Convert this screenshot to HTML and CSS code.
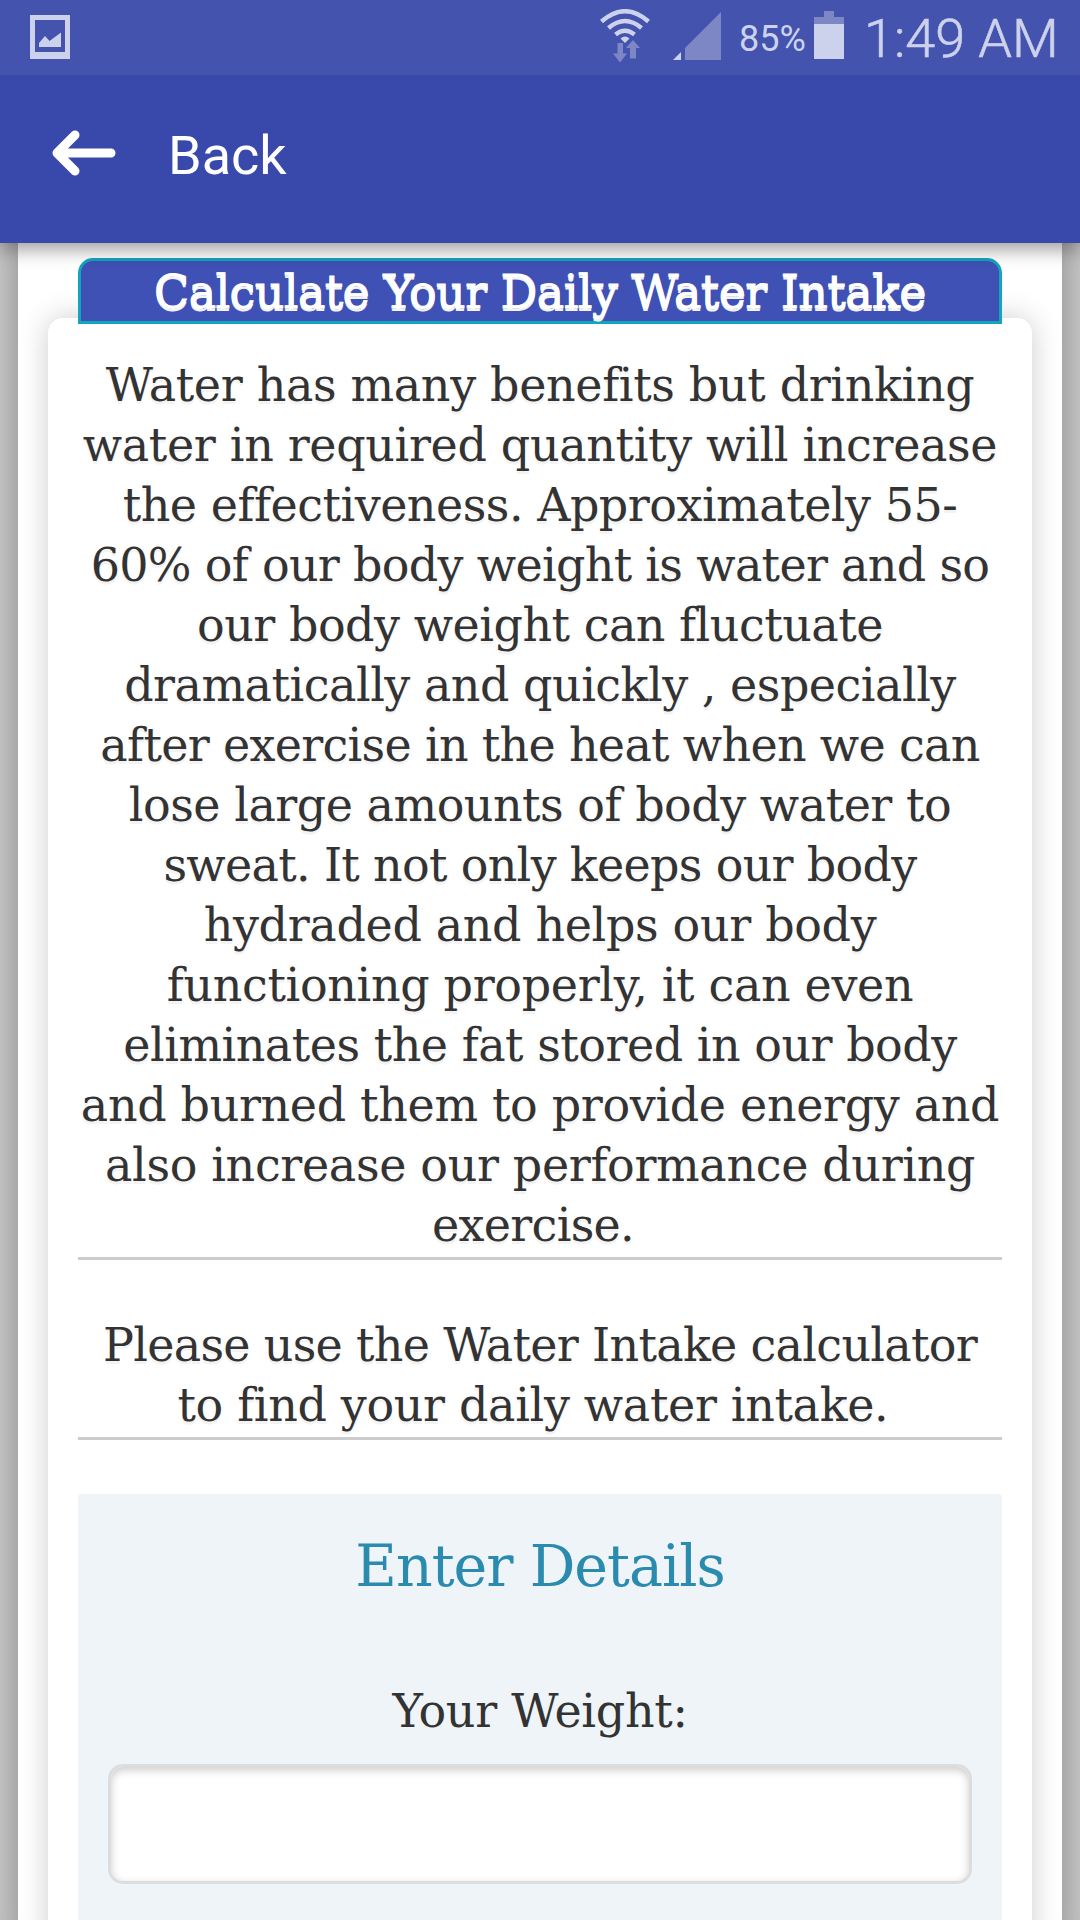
FILE: index.html
```html
<!DOCTYPE html>
<html lang="en">
<head>
<meta charset="UTF-8">
<title>Water Intake Calculator</title>
<link rel="stylesheet" href="styles.css">
</head>
<body>

<div class="status-bar">
    <svg class="picture-icon" width="40" height="44" viewBox="0 0 40 44">
        <path fill-rule="evenodd" d="M0 0H40V44H0ZM5 5V37H35V5Z"/>
        <path d="M9 32V28L15 21L19.500 26L31 17.500V32Z"/>
    </svg>
    <svg class="wifi-icon" width="50" height="54" viewBox="0 0 50 54">
        <g fill="none" stroke="#cdd2ec" stroke-width="4.500">
            <path d="M1.500 12.500Q25 -8 48.500 12.500"/>
            <path d="M8.500 19Q25 5 41.500 19"/>
            <path d="M15.500 25.500Q25 18 34.500 25.500"/>
        </g>
        <path d="M20.500 29.500Q25 25.500 29.500 29.500L25 34Z"/>
        <path class="faint" d="M17.500 34H23V44.500H27L20 53.500L13 44.500H17.500ZM30 49.500V39H26L33 31L40 39H36V49.500Z"/>
    </svg>
    <svg class="signal-icon" width="48" height="48" viewBox="0 0 48 48">
        <path d="M0 48L8 40V48Z"/>
        <path class="faint" d="M12 48V36L48 0V48Z"/>
    </svg>
    <span class="battery-text">85%</span>
    <svg class="battery-icon" width="30" height="48" viewBox="0 0 30 48">
        <path class="faint" d="M10 0H20V6H30V13H0V6H10Z"/>
        <path d="M0 13H30V48H0Z"/>
    </svg>
    <span class="time">1:49 AM</span>
</div>

<div class="header">
    <svg class="back-arrow" width="64" height="46" viewBox="0 0 64 46">
        <path d="M23 5L5 23L23 41M6 23H59"/>
    </svg>
    <span class="back-text">Back</span>
</div>

<div class="page">
    <h1 class="title">Calculate Your Daily Water Intake</h1>
    <div class="card">
        <p class="intro">
            <span class="loose">Water has many benefits but drinking</span><br>
            <span class="loose">water in required quantity will increase</span><br>
            the effectiveness. Approximately 55-<br>
            <span class="tight">60% of our body weight is water and so</span><br>
            our body weight can fluctuate<br>
            dramatically and quickly , especially<br>
            <span class="tight">after exercise in the heat when we can</span><br>
            lose large amounts of body water to<br>
            <span class="tight">sweat. It not only keeps our body</span><br>
            <span class="loose">hydraded and helps our body</span><br>
            <span class="loose">functioning properly, it can even</span><br>
            eliminates the fat stored in our body<br>
            <span class="loose">and burned them to provide energy and</span><br>
            <span class="loose">also increase our performance during</span><br>
            <span class="tight">exercise.&nbsp;</span>
        </p>
        <p class="intro">
            <span class="tight">Please use the Water Intake calculator</span><br>
            <span class="loose">to find your daily water intake.&nbsp;</span>
        </p>
        <form class="details">
            <h2>Enter Details</h2>
            <label for="weight">Your Weight:</label>
            <input type="text" id="weight">
        </form>
    </div>
</div>

</body>
</html>
```
FILE: styles.css
```css
* {
    box-sizing: border-box;
}

body {
    margin: 0;
    height: 1920px;
    overflow: hidden;
    background: #c6c6c6;
    color: #333;
    font-family: "DejaVu Serif", serif;
    font-size: 46px;
}

.status-bar {
    display: flex;
    height: 75px;
    padding-left: 30px;
    background: #4453ad;
    color: #cdd2ec;
    fill: #cdd2ec;
    font-family: Roboto, sans-serif;
}

.faint {
    fill: #7d87c6;
}

.picture-icon {
    margin-top: 15px;
}

.wifi-icon {
    margin: 9px 0 0 530px;
}

.signal-icon {
    margin: 12px 0 0 23px;
}

.battery-text {
    width: 75px;
    margin-left: 18px;
    font-size: 36px;
    line-height: 78px;
}

.battery-icon {
    margin: 11px 0 0 0;
}

.time {
    margin-left: 20px;
    font-size: 54px;
    font-weight: 300;
    line-height: 78px;
    white-space: nowrap;
    -webkit-text-stroke: 0.6px #cdd2ec;
}

.header {
    position: relative;
    z-index: 1;
    display: flex;
    align-items: center;
    height: 168px;
    padding: 0 0 12px 52px;
    background: #3949ab;
    box-shadow: 0 6px 18px rgba(0, 0, 0, 0.4);
    clip-path: inset(0 0 -30px 0);
    color: #fff;
    font-family: Roboto, sans-serif;
    font-size: 54px;
}

.back-arrow {
    fill: none;
    stroke: #fff;
    stroke-width: 9;
    stroke-linecap: round;
    stroke-linejoin: round;
}

.back-text {
    margin-left: 52px;
    padding-top: 4px;
}

.page {
    height: 1700px;
    margin: 0 18px;
    padding: 15px 30px 0;
    background: #fff;
    box-shadow: 0 0 30px rgba(0, 0, 0, 0.3);
}

.title {
    position: relative;
    height: 66px;
    margin: 0 30px -6px;
    background: #3f51b5;
    border: 3px solid #13a5bd;
    border-radius: 15px 15px 0 0;
    color: #fff;
    font-size: 46px;
    font-weight: normal;
    letter-spacing: -0.6px;
    line-height: 63px;
    text-align: center;
    text-shadow: 0 3px 0 #f3f3f3;
    white-space: nowrap;
    -webkit-text-stroke: 0.9px #fff;
}

.card {
    height: 1650px;
    padding: 37px 30px 0;
    background: #fff;
    border-radius: 15px;
    box-shadow: 0 0 30px rgba(0, 0, 0, 0.2);
}

.intro {
    margin: 0 0 55px;
    padding-bottom: 2px;
    border-bottom: 3px solid #ccc;
    letter-spacing: -0.5px;
    line-height: 60px;
    text-align: center;
    text-shadow: 0 3px 0 #f3f3f3;
    white-space: nowrap;
}

.loose {
    letter-spacing: -0.35px;
}

.tight {
    letter-spacing: -0.7px;
}

.details {
    height: 500px;
    margin-top: -1px;
    padding: 35px 30px 0;
    background: #eff4f8;
    border-radius: 3px;
    text-align: center;
}

.details h2 {
    margin: 0 0 77px;
    color: #2a8bae;
    font-size: 57px;
    font-weight: normal;
    letter-spacing: -1px;
    line-height: 75px;
}

.details label {
    display: block;
    letter-spacing: -0.3px;
    line-height: 60px;
}

.details input {
    display: block;
    width: 100%;
    height: 120px;
    margin-top: 23px;
    background: #fff;
    border: 3px solid #ddd;
    border-radius: 15px;
    box-shadow: inset 0 3px 9px #ccc;
}
```
